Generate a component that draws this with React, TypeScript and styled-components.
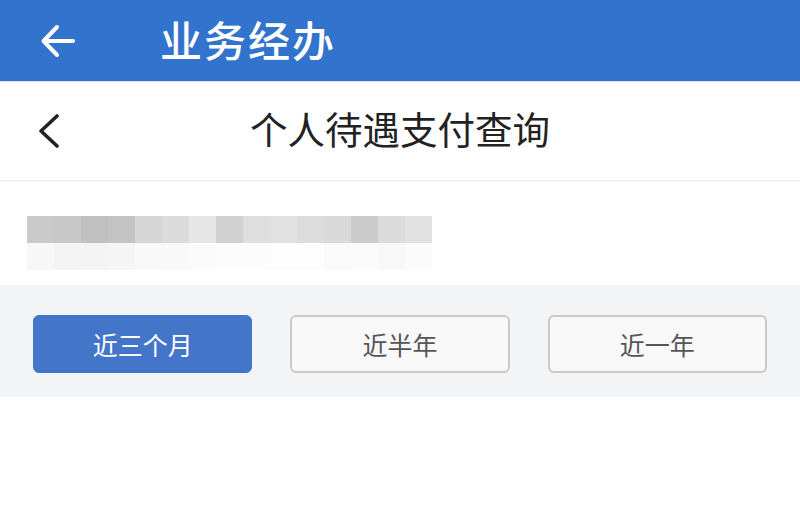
import React from "react";
import styled, { createGlobalStyle } from "styled-components";

const Global = createGlobalStyle`
  html, body { margin: 0; padding: 0; background: #ffffff; }
  body { font-family: "Noto Sans CJK SC", "Noto Sans", sans-serif; }
`;

const Page = styled.div`
  width: 800px;
  height: 514px;
  display: flex;
  flex-direction: column;
  background: #ffffff;
  overflow: hidden;
`;

const TopBar = styled.header`
  height: 81px;
  flex: none;
  background: #3274cd;
  display: flex;
  align-items: center;
  padding-left: 40px;
  gap: 84px;
  box-shadow: 0 1px 1px rgba(0, 0, 0, 0.12);
  position: relative;
  z-index: 1;
`;

const TopTitle = styled.h1`
  margin: 0;
  color: #ffffff;
  font-size: 42px;
  font-weight: 500;
  letter-spacing: 2px;
  line-height: 1;
  padding-bottom: 4px;
`;

const SubBar = styled.div`
  height: 99px;
  flex: none;
  display: grid;
  grid-template-columns: 1fr auto 1fr;
  align-items: center;
  border-bottom: 1px solid #e6e6e6;
  background: #ffffff;
`;

const BackButton = styled.div`
  padding-left: 38px;
  display: flex;
  align-items: center;
`;

const SubTitle = styled.h2`
  margin: 0;
  font-size: 37.5px;
  font-weight: 400;
  color: #222222;
  line-height: 1;
  padding-bottom: 6px;
`;

const InfoBlock = styled.div`
  height: 104px;
  flex: none;
  padding: 35px 0 0 27px;
  box-sizing: border-box;
  display: flex;
  flex-direction: column;
`;

const MosaicRow = styled.div`
  display: flex;
`;

const Tile = styled.div<{ $shade: string; $h: number }>`
  width: 27px;
  height: ${(p) => p.$h}px;
  background: ${(p) => p.$shade};
`;

const FilterArea = styled.div`
  height: 112px;
  flex: none;
  background: #f3f4f6;
  display: flex;
  align-items: center;
  padding: 0 33px 0 33px;
  gap: 38px;
`;

const RangeButton = styled.button<{ $active?: boolean }>`
  width: 220px;
  height: 58px;
  margin-top: 6px;
  border-radius: 6px;
  box-sizing: border-box;
  border: ${(p) => (p.$active ? "1px solid #4375c9" : "2px solid #c9c9c9")};
  background: ${(p) => (p.$active ? "#4375c9" : "#f8f8f9")};
  color: ${(p) => (p.$active ? "#ffffff" : "#555555")};
  font-family: "Noto Sans CJK SC", "Noto Sans", sans-serif;
  font-size: 25px;
  font-weight: 400;
  padding: 0;
  display: flex;
  align-items: center;
  justify-content: center;
`;

const Rest = styled.div`
  flex: 1;
  background: #ffffff;
`;

const topShades = [
  "#cacaca", "#c8c8c8", "#c0c0c0", "#c4c4c4", "#d6d6d6",
  "#dbdbdb", "#e6e6e6", "#d0d0d0", "#dedede", "#e1e1e1",
  "#dcdcdc", "#d9d9d9", "#cccccc", "#dbdbdb", "#e2e2e2",
];
const bottomShades = [
  "#f7f7f7", "#f3f3f3", "#f4f4f4", "#f5f5f5", "#f8f8f8",
  "#f9f9f9", "#fbfbfb", "#fcfcfc", "#fcfcfc", "#fdfdfd",
  "#fdfdfd", "#fafafa", "#fbfbfb", "#f8f8f8", "#fbfbfb",
];

export default function App() {
  return (
    <Page>
      <Global />
      <TopBar>
        <svg width="36" height="36" viewBox="0 0 36 36" fill="none">
          <path
            d="M33 18H4M17 4L3.5 18L17 32"
            stroke="#ffffff"
            strokeWidth="4"
            strokeLinecap="round"
            strokeLinejoin="round"
          />
        </svg>
        <TopTitle>业务经办</TopTitle>
      </TopBar>
      <SubBar>
        <BackButton>
          <svg width="22" height="34" viewBox="0 0 22 34" fill="none">
            <path
              d="M19 2L3 17L19 32"
              stroke="#222222"
              strokeWidth="3.6"
              strokeLinecap="round"
              strokeLinejoin="round"
            />
          </svg>
        </BackButton>
        <SubTitle>个人待遇支付查询</SubTitle>
        <div />
      </SubBar>
      <InfoBlock>
        <MosaicRow>
          {topShades.map((s, i) => (
            <Tile key={i} $shade={s} $h={27} />
          ))}
        </MosaicRow>
        <MosaicRow>
          {bottomShades.map((s, i) => (
            <Tile key={i} $shade={s} $h={27} />
          ))}
        </MosaicRow>
      </InfoBlock>
      <FilterArea>
        <RangeButton $active>近三个月</RangeButton>
        <RangeButton>近半年</RangeButton>
        <RangeButton>近一年</RangeButton>
      </FilterArea>
      <Rest />
    </Page>
  );
}
